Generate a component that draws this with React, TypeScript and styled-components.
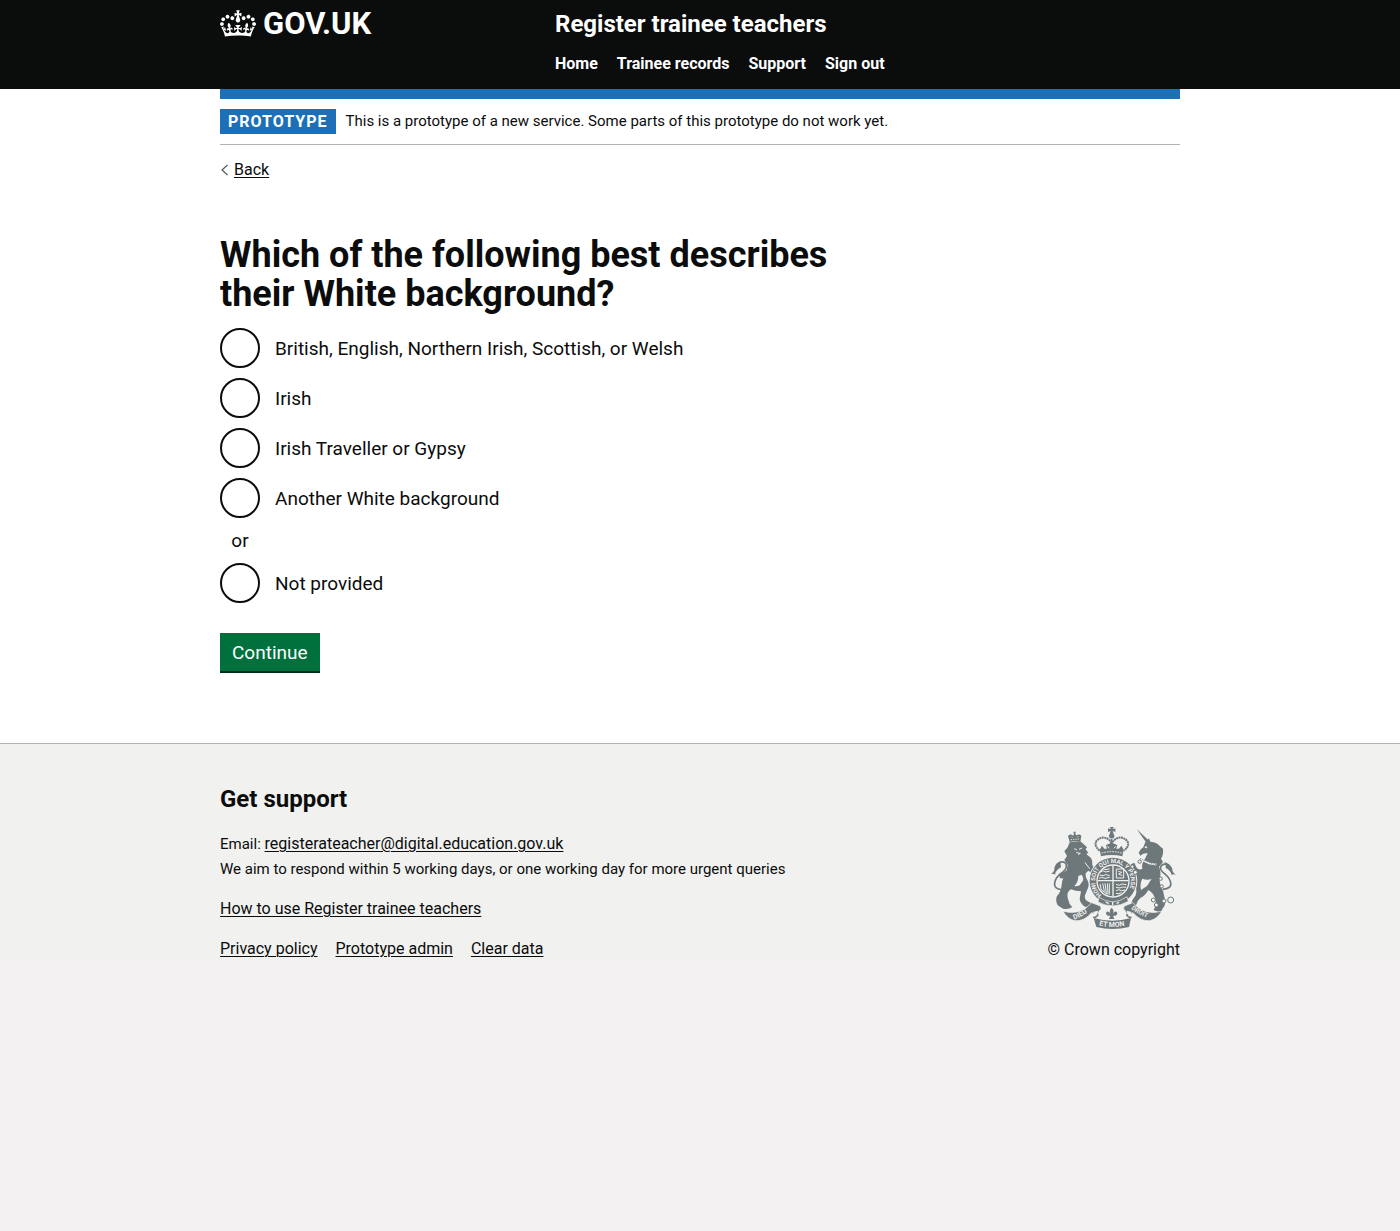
import React from 'react';
import styled, { createGlobalStyle } from 'styled-components';

const ink = '#0b0c0c';
const blue = '#1d70b8';
const paper = '#f1f1f0';
const slate = '#6e787b';

const GlobalStyle = createGlobalStyle`
  *, *::before, *::after { box-sizing: border-box; }
  html { background: #f3f1f2; }
  body {
    margin: 0;
    background: #fff;
    color: ${ink};
    font-family: Roboto, "Liberation Sans", Arial, sans-serif;
    font-size: 16px;
    line-height: 25px;
  }
`;

const Container = styled.div`
  max-width: 960px;
  margin: 0 auto;

  @media (max-width: 1020px) {
    margin: 0 30px;
  }
`;

const Link = styled.a`
  color: ${ink};
  font-size: 16px;
  line-height: 20px;
  text-decoration: underline;
  text-decoration-thickness: 1px;
  text-underline-offset: 2px;
`;

/* Header */

const Header = styled.header`
  background: ${ink};
  color: #fff;
`;

const HeaderRow = styled(Container)`
  display: flex;
  flex-wrap: wrap;
  padding: 10px 0 15px;
`;

const LogoColumn = styled.div`
  flex: 0 0 335px;
`;

const LogoLink = styled.a`
  display: inline-flex;
  align-items: center;
  gap: 7px;
  height: 27px;
  color: #fff;
  font-size: 31px;
  font-weight: 700;
  line-height: 27px;
  text-decoration: none;
`;

const ServiceColumn = styled.div`
  display: flex;
  flex: 1;
  flex-direction: column;
  align-items: flex-start;
  gap: 15px;
`;

const ServiceName = styled.a`
  color: #fff;
  font-size: 24px;
  font-weight: 700;
  line-height: 29px;
  text-decoration: none;
`;

const NavList = styled.ul`
  display: flex;
  flex-wrap: wrap;
  gap: 19px;
  margin: 0;
  padding: 0;
  list-style: none;
`;

const NavLink = styled.a`
  display: block;
  color: #fff;
  font-weight: 700;
  line-height: 20px;
  text-decoration: none;
`;

/* Page */

const BlueBar = styled.div`
  height: 10px;
  background: ${blue};
`;

const PhaseBanner = styled.div`
  display: flex;
  align-items: center;
  gap: 10px;
  padding: 10px 0;
  border-bottom: 1px solid #b1b4b6;
  font-size: 15px;
`;

const Tag = styled.strong`
  padding: 0 8px;
  background: ${blue};
  color: #fff;
  font-size: 16px;
  letter-spacing: 1px;
  text-transform: uppercase;
`;

const BackRow = styled.div`
  display: flex;
  align-items: center;
  gap: 5px;
  margin-top: 15px;
  line-height: 20px;
`;

const Main = styled.main`
  padding: 56px 0 70px;
`;

const Question = styled.fieldset`
  max-width: 640px;
  min-width: 0;
  margin: 0 0 30px;
  padding: 0;
  border: 0;
`;

const Legend = styled.legend`
  margin: 0 0 14px;
  padding: 0;
`;

const Heading = styled.h1`
  margin: 0;
  font-size: 36px;
  font-weight: 700;
  line-height: 39px;
`;

const RadioList = styled.div`
  display: flex;
  flex-direction: column;
  gap: 10px;
  font-size: 19px;
`;

const RadioRow = styled.div`
  display: flex;
  align-items: center;
`;

const Radio = styled.input`
  display: grid;
  flex: none;
  place-items: center;
  width: 40px;
  height: 40px;
  margin: 0;
  border: 2px solid ${ink};
  border-radius: 50%;
  background: transparent;
  appearance: none;
  cursor: pointer;

  &:checked::before {
    width: 20px;
    height: 20px;
    border-radius: 50%;
    background: ${ink};
    content: "";
  }

  &:focus-visible {
    outline: 3px solid #ffdd00;
    outline-offset: 1px;
  }
`;

const RadioLabel = styled.label`
  padding-left: 15px;
  cursor: pointer;
`;

const Divider = styled.div`
  width: 40px;
  text-align: center;
`;

const Button = styled.button`
  display: block;
  height: 38px;
  padding: 0 12px;
  border: 0;
  background: #00703c;
  box-shadow: 0 2px 0 #002d18;
  color: #fff;
  font-family: inherit;
  font-size: 19px;
  line-height: 39px;
  cursor: pointer;
`;

const ButtonRow = styled.div`
  padding-bottom: 2px;
`;

/* Footer */

const Footer = styled.footer`
  padding: 40px 0 0;
  border-top: 1px solid #b1b4b6;
  background: ${paper};
`;

const FooterRow = styled(Container)`
  display: flex;
  flex-wrap: wrap;
  align-items: flex-end;
  justify-content: space-between;
  gap: 30px;
`;

const FooterHeading = styled.h2`
  margin: 0 0 18px;
  font-size: 24px;
  font-weight: 700;
  line-height: 30px;
`;

const Prose = styled.p`
  margin: 0 0 15px;
  font-size: 15px;
`;

const FooterLinks = styled.ul`
  display: flex;
  flex-wrap: wrap;
  gap: 0 18px;
  margin: 0;
  padding: 0;
  font-size: 15px;
  list-style: none;
`;

const Copyright = styled.a`
  display: flex;
  flex-direction: column;
  align-items: center;
  gap: 8px;
  color: ${ink};
  text-decoration: none;
`;

const Crown = () => (
  <svg width="36" height="27" viewBox="0 0 132 97" fill="currentColor" aria-hidden="true">
    <path
      fillRule="evenodd"
      d="M25 30.2c3.5 1.5 7.7-.2 9.1-3.7 1.5-3.6-.2-7.8-3.9-9.2-3.6-1.4-7.6.3-9.1 3.9-1.4 3.5.3 7.5 3.9 9zM9 39.5c3.6 1.5 7.8-.2 9.2-3.7 1.5-3.6-.2-7.8-3.9-9.1-3.6-1.5-7.6.2-9.1 3.8-1.4 3.5.3 7.5 3.8 9zM4.4 57.2c3.5 1.5 7.7-.2 9.1-3.8 1.5-3.6-.2-7.7-3.9-9.1-3.5-1.5-7.6.3-9.1 3.8-1.4 3.5.3 7.6 3.9 9.1zm38.3-21.4c3.5 1.5 7.7-.2 9.1-3.8 1.5-3.6-.2-7.7-3.9-9.1-3.6-1.5-7.6.3-9.1 3.8-1.3 3.6.4 7.7 3.9 9.1zm64.4-5.6c-3.6 1.5-7.8-.2-9.1-3.7-1.5-3.6.2-7.8 3.8-9.2 3.6-1.4 7.7.3 9.2 3.9 1.3 3.5-.4 7.5-3.9 9zm15.9 9.3c-3.6 1.5-7.7-.2-9.1-3.7-1.5-3.6.2-7.8 3.7-9.1 3.6-1.5 7.7.2 9.2 3.8 1.5 3.5-.3 7.5-3.8 9zm4.7 17.7c-3.6 1.5-7.8-.2-9.2-3.8-1.5-3.6.2-7.7 3.9-9.1 3.6-1.5 7.7.3 9.2 3.8 1.3 3.5-.4 7.6-3.9 9.1zM89.3 35.8c-3.6 1.5-7.8-.2-9.2-3.8-1.4-3.6.2-7.7 3.9-9.1 3.6-1.5 7.7.3 9.2 3.8 1.4 3.6-.3 7.7-3.9 9.1zM69.7 17.7l8.9 4.7V9.3l-8.9 2.8c-.2-.3-.5-.6-.9-.9L72.4 0H59.6l3.5 11.2c-.3.3-.6.5-.9.9l-8.8-2.8v13.1l8.8-4.7c.3.3.6.7.9.9l-5 15.4v.1c-.2.8-.4 1.6-.4 2.4 0 4.1 3.1 7.5 7 8.1h.2c.3 0 .7.1 1 .1.4 0 .7 0 1-.1h.2c4-.6 7.1-4.1 7.1-8.1 0-.8-.1-1.7-.4-2.4V34l-5.1-15.4c.4-.2.7-.6 1-.9zM66 92.8c16.9 0 32.8 1.1 47.1 3.2 4-16.9 8.9-26.7 14-33.5l-9.6-3.4c1 4.9 1.1 7.2 0 10.2-1.5-1.4-3-4.3-4.2-8.7L108.6 76c2.8-2 5-3.2 7.5-3.3-4.4 9.4-10 11.9-13.6 11.2-4.3-.8-6.3-4.6-5.6-7.9 1-4.7 5.7-5.9 8-.5 4.3-8.7-3-11.4-7.6-8.8 7.1-7.2 7.9-13.5 2.1-21.1-8 6.1-8.1 12.3-4.5 20.8-4.7-5.4-12.1-2.5-9.5 6.2 3.4-5.2 7.9-2 7.2 3.1-.6 4.3-6.4 7.8-13.5 7.2-10.3-.9-10.9-8-11.2-13.8 2.5-.5 7.1 1.8 11 7.3L80.2 60c-4.1 4.4-8 5.3-12.3 5.4 1.4-4.4 8-11.6 8-11.6H55.5s6.4 7.2 7.9 11.6c-4.2-.1-8-1-12.3-5.4l1.4 16.4c3.9-5.5 8.5-7.7 10.9-7.3-.3 5.8-.9 12.8-11.1 13.8-7.2.6-12.9-2.9-13.5-7.2-.7-5 3.8-8.3 7.1-3.1 2.7-8.7-4.6-11.6-9.4-6.2 3.7-8.5 3.6-14.7-4.6-20.8-5.8 7.6-5 13.9 2.2 21.1-4.7-2.6-11.9.1-7.7 8.8 2.3-5.5 7.1-4.2 8.1.5.7 3.3-1.3 7.1-5.7 7.9-3.5.7-9-1.8-13.5-11.2 2.5.1 4.7 1.3 7.5 3.3l-4.7-15.4c-1.2 4.4-2.7 7.2-4.3 8.7-1.1-3-.9-5.3 0-10.2l-9.5 3.4c5 6.9 9.9 16.7 14 33.5 14.8-2.1 30.8-3.2 47.7-3.2z"
    />
  </svg>
);

const BackArrow = () => (
  <svg width="9" height="12" viewBox="0 0 9 12" fill="none" stroke="#505a5f" aria-hidden="true">
    <path d="M7.5 1 2 6l5.5 5" strokeWidth="1.2" />
  </svg>
);

const Crest = () => (
  <svg
    width="125"
    height="102"
    viewBox="36 21 375 306"
    fill={slate}
    fontFamily="Roboto, sans-serif"
    fontWeight="700"
    aria-hidden="true"
  >
    <defs>
      <path id="garter" d="M188 225A54 54 0 1 1 256 225" />
      <path id="dieu" d="M106 299Q134 289 160 264" />
      <path id="droit" d="M276 266Q306 290 342 299" />
      <path id="etmon" d="M180 316Q220 326 268 315" />
    </defs>

    {/* lion */}
    <path d="M92 66 87 48q8-8 15-1l3-4-2-8h7l-1 8 4 3q8-6 14 1l-3 18q-16-3-32 1z" />
    <path d="m95 59 28-2M97 50l4 4M117 49l-3 4" stroke={paper} strokeWidth="2.5" strokeDasharray="4 3" />
    <path d="m92 67 32-3 12 10 8 8-4 6 8 10-6 4 14 12q6 10 4 22l12 14 6 8q-6 8-16 4l-14-10-8 8q-2 12 6 22 6 10 0 24l-8 20q-4 14 12 20l12 6-2 10-22-2q-14-8-16-24l4-22q-16 0-30-6-14 8-10 26l6 18 8 10q-14 8-28 4l-16-10q-8-16-2-28 12-12 14-34 0-20 18-34-4-16 0-26l-10-14 8-12-8-14 10-12z" />
    <path d="M106 86l8 4M120 88l9-4M112 98l12 2-6 4M138 128l14 18" fill="none" stroke={paper} strokeWidth="3" />
    <path d="m118 168 10-4q6 8 4 18l-10 14q-8 4-16 2 12-12 12-30z" fill={paper} />
    <path d="m96 140-20 16-14 4 0 14 14 2 24-12z" />
    <path d="M72 209q-28-1-25-20 2-18 25-33 12-10 10-22-4-10-16-8" fill="none" stroke={slate} strokeWidth="5" />
    <path d="M36 162q12-8 10-18 4-18 22-21-6 10-2 19-16 8-18 22-5-5-12-2z" />

    {/* unicorn */}
    <path d="m293 27 29 41 8-6z" />
    <path d="m318 68 12-13 4 10q22 2 28 13l10 8q2 18-6 30l6 10-12 14q8 20 2 36 0 22 10 36l6 28q2 16-6 24l-8 14-20-8q10-18 4-36-6-16-20-24-10 18-24 24-10 8-14 24l-16 0q4-18 16-32 6-18-4-38l-2-26-16-12q-4-8 4-16l14-6 6 14q6 10 18 4-4-14 8-30l8-16q-12-2-22 7l-5-9q6-12 14-16z" />
    <path d="m302 112 12 10 17 8 21 4M318 80l6 3" fill="none" stroke={paper} strokeWidth="5" />
    <path d="M303 116l51 20" fill="none" stroke={slate} strokeWidth="3" strokeDasharray="3 3" />
    <path d="m338 176-14 22-18 12q-4-20 4-34 16 6 28 0z" fill={paper} />
    <path d="M371 208q28-2 24-21-4-16-23-30-11-10-6-19 8-9 16-4" fill="none" stroke={slate} strokeWidth="5" />
    <path d="M411 164q-12-7-11-18-7-16-24-20 7 9 4 18 15 7 18 21 5-4 13-1z" />

    {/* imperial crown */}
    <path d="M213 21h11l-3 7 8-3v11l-8-3 3 9q5 7-1 13h-10q-6-6-1-13l3-9-8 3V25l8 3z" />
    <path
      d="M182 92q-20-17-8-31 19-16 37-1 7 6 7 20 0-14 8-20 19-15 37 1 12 14-8 31"
      fill="none"
      stroke={slate}
      strokeWidth="6"
      strokeDasharray="6 1.5"
    />
    <path d="M218 56v30" stroke={slate} strokeWidth="5" />
    <path d="m182 89 7-12 7 9 8 0-3-11 17-7 17 7-3 11 8 0 7-9 7 12-4 20q-32-8-64 0z" />
    <path d="M188 99q30-8 60 0" fill="none" stroke={paper} strokeWidth="3" strokeDasharray="5 3" />
    <path d="M206 79l5 6M230 79l-5 6" stroke={paper} strokeWidth="3" />

    {/* garter and shield */}
    <circle cx="222" cy="183" r="73" fill={paper} />
    <circle cx="222" cy="183" r="70" />
    <circle cx="222" cy="183" r="48" fill={slate} stroke={paper} strokeWidth="4" />
    <text fill={paper} fontSize="18">
      <textPath href="#garter">HONI SOIT QUI MAL Y PENSE</textPath>
    </text>
    <g fill="none" stroke={paper} strokeWidth="3">
      <path d="M222 136v92M176 182h92" strokeWidth="4" />
      <path d="m184 157 8-5 8 4 12-3M182 165l10 2 8-3 12 3M180 175l8-3 10 3 14-3M192 146l9 3 11-3" />
      <path d="M232 147h22v27h-22zM238 154l10 3-9 5 11 5" />
      <path d="m183 192 4 18 19 13M191 190l5 24M198 190l4 28M205 190l2 32M211 190v34" />
      <path d="m231 193 9 3 9-4 13 2M231 202l12 2 8-3 11 1M231 212l8-3 8 3 11-2M231 220l9 1 8-4" />
    </g>
    <g fill={paper} stroke={slate} strokeWidth="3">
      <circle cx="280" cy="140" r="5" />
      <circle cx="289" cy="157" r="6" />
      <circle cx="302" cy="125" r="5" />
      <circle cx="365" cy="176" r="5" />
      <circle cx="368" cy="199" r="5" />
      <circle cx="343" cy="240" r="6" />
      <circle cx="352" cy="255" r="6" />
      <circle cx="375" cy="243" r="6" />
      <circle cx="395" cy="240" r="9" />
    </g>
    <path d="M180 232q42 28 84-2l4 14q-46 26-91 2z" stroke={paper} strokeWidth="2" />
    <path d="m200 246 9 5M221 246v9M240 246l-7 5" stroke={paper} strokeWidth="4" />

    {/* motto scroll */}
    <path d="M72 274q54 14 86-26l26 10q6 8-4 16l-4 12-18-8q-22 26-50 24-22-4-36-28z" stroke={paper} strokeWidth="2" />
    <path d="M368 274q-54 14-86-26l-26 10q-6 8 4 16l4 12 18-8q22 26 50 24 22-4 36-28z" stroke={paper} strokeWidth="2" />
    <path d="m162 276 14-4q4 8-8 14zM278 276l-14-4q-4 8 8 14z" fill={paper} />
    <path d="M162 292q11 1 16-9M278 292q-11 1-16-9" fill="none" stroke={slate} strokeWidth="4" />
    <path d="M164 294q56 16 112 0l-6 27q-50 12-98 0z" />
    <g fill={paper} fontSize="21">
      <text><textPath href="#dieu">DIEU</textPath></text>
      <text fontSize="19"><textPath href="#droit">DROIT</textPath></text>
      <text><textPath href="#etmon">ET MON</textPath></text>
    </g>
    <path d="M218 263q9 9 4 19 4-10 11-7 5 7-4 12l-7 0 4 10h-16l4-10-7 0q-9-5-4-12 7-3 11 7-5-10 4-19z" />
  </svg>
);

const navItems = ['Home', 'Trainee records', 'Support', 'Sign out'];
const footerItems = ['Privacy policy', 'Prototype admin', 'Clear data'];
const backgrounds = [
  { id: 'british', label: 'British, English, Northern Irish, Scottish, or Welsh' },
  { id: 'irish', label: 'Irish' },
  { id: 'traveller', label: 'Irish Traveller or Gypsy' },
  { id: 'another', label: 'Another White background' },
];

const RadioOption = ({ id, label }: { id: string; label: string }) => (
  <RadioRow>
    <Radio type="radio" name="background" id={id} value={id} />
    <RadioLabel htmlFor={id}>{label}</RadioLabel>
  </RadioRow>
);

export default function App() {
  return (
    <>
      <GlobalStyle />
      <Header>
        <HeaderRow>
          <LogoColumn>
            <LogoLink href="#">
              <Crown />
              GOV.UK
            </LogoLink>
          </LogoColumn>
          <ServiceColumn>
            <ServiceName href="#">Register trainee teachers</ServiceName>
            <nav>
              <NavList>
                {navItems.map((item) => (
                  <li key={item}>
                    <NavLink href="#">{item}</NavLink>
                  </li>
                ))}
              </NavList>
            </nav>
          </ServiceColumn>
        </HeaderRow>
      </Header>

      <Container>
        <BlueBar />
        <PhaseBanner>
          <Tag>Prototype</Tag>
          <span>This is a prototype of a new service. Some parts of this prototype do not work yet.</span>
        </PhaseBanner>
        <BackRow>
          <BackArrow />
          <Link href="#">Back</Link>
        </BackRow>
        <Main>
          <form onSubmit={(event) => event.preventDefault()}>
            <Question>
              <Legend>
                <Heading>Which of the following best describes their White background?</Heading>
              </Legend>
              <RadioList>
                {backgrounds.map((option) => (
                  <RadioOption key={option.id} {...option} />
                ))}
                <Divider>or</Divider>
                <RadioOption id="not-provided" label="Not provided" />
              </RadioList>
            </Question>
            <ButtonRow>
              <Button type="submit">Continue</Button>
            </ButtonRow>
          </form>
        </Main>
      </Container>

      <Footer>
        <FooterRow>
          <div>
            <FooterHeading>Get support</FooterHeading>
            <Prose>
              Email:{' '}
              <Link href="mailto:registerateacher@digital.education.gov.uk">
                registerateacher@digital.education.gov.uk
              </Link>
              <br />
              We aim to respond within 5 working days, or one working day for more urgent queries
            </Prose>
            <Prose>
              <Link href="#">How to use Register trainee teachers</Link>
            </Prose>
            <FooterLinks>
              {footerItems.map((item) => (
                <li key={item}>
                  <Link href="#">{item}</Link>
                </li>
              ))}
            </FooterLinks>
          </div>
          <Copyright href="#">
            <Crest />
            © Crown copyright
          </Copyright>
        </FooterRow>
      </Footer>
    </>
  );
}
